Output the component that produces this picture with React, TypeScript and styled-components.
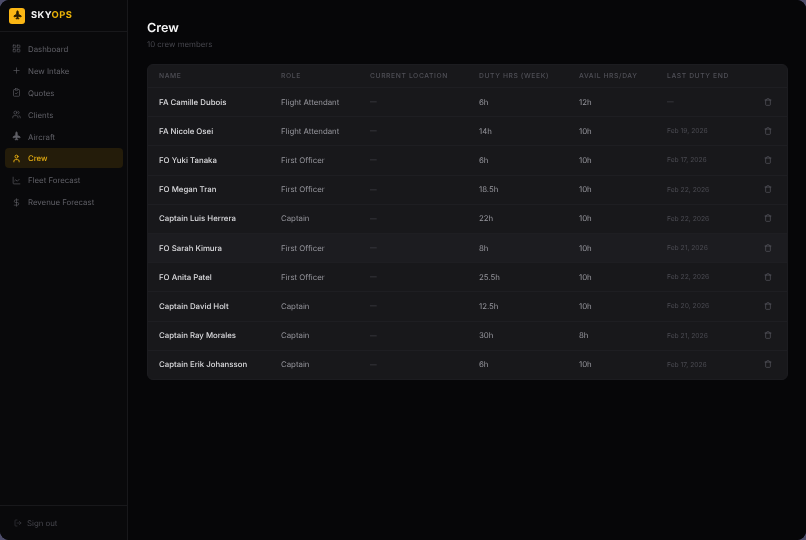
import React from 'react';
import styled, { createGlobalStyle } from 'styled-components';
import {
  LayoutGrid,
  Plus,
  ClipboardCheck,
  Users,
  Plane,
  User,
  ChartLine,
  DollarSign,
  LogOut,
  Trash,
} from 'lucide-react';

const GlobalStyle = createGlobalStyle`
  html, body {
    margin: 0;
    padding: 0;
    height: 100%;
    background: #4d4d6b;
  }
  #root {
    height: 100%;
  }
  * {
    box-sizing: border-box;
  }
`;

const Shell = styled.div`
  display: flex;
  width: 806px;
  height: 540px;
  overflow: hidden;
  border-radius: 9px;
  background: #060608;
  font-family: Inter, 'Liberation Sans', sans-serif;
  text-rendering: geometricPrecision;
  -webkit-font-smoothing: antialiased;
  will-change: transform;
`;

const Sidebar = styled.aside`
  width: 128px;
  flex-shrink: 0;
  display: flex;
  flex-direction: column;
  background: #09090b;
  border-right: 1px solid #18181b;
`;

const Brand = styled.div`
  height: 32px;
  display: flex;
  align-items: center;
  gap: 6px;
  padding: 0 9px;
  border-bottom: 1px solid #18181b;
`;

const BrandMark = styled.div`
  width: 16px;
  height: 16px;
  border-radius: 3px;
  background: #fbb614;
  color: #2a1d02;
  display: flex;
  align-items: center;
  justify-content: center;
`;

const TopPlane = styled(Plane)`
  transform: rotate(-45deg);
  fill: currentColor;
`;

const BrandName = styled.span`
  font-size: 9.4px;
  font-weight: 700;
  letter-spacing: 0.4px;
  color: #f4f4f5;
`;

const BrandAccent = styled.span`
  color: #eab308;
`;

const Nav = styled.nav`
  flex: 1;
  display: flex;
  flex-direction: column;
  gap: 2px;
  padding: 7px 4px 7px 5px;
`;

const NavItem = styled.div<{ $active?: boolean }>`
  height: 19.9px;
  display: flex;
  align-items: center;
  gap: 7px;
  padding: 0 7px;
  border-radius: 4px;
  font-size: 7.84px;
  font-weight: ${(p) => (p.$active ? 500 : 400)};
  color: ${(p) => (p.$active ? '#e5ad12' : '#606067')};
  background: ${(p) => (p.$active ? '#241c0a' : 'transparent')};
`;

const SidebarFoot = styled.div`
  height: 35px;
  display: flex;
  align-items: center;
  gap: 5px;
  padding: 0 14px;
  border-top: 1px solid #18181b;
  font-size: 7.84px;
  color: #46464d;
`;

const Main = styled.main`
  flex: 1;
  padding: 20px 19px 0;
  background: #060608;
`;

const Title = styled.h1`
  margin: 0;
  font-size: 12.6px;
  line-height: 18px;
  font-weight: 600;
  color: #f4f4f5;
`;

const Subtitle = styled.p`
  margin: 1px 0 14px;
  font-size: 7.84px;
  line-height: 11px;
  color: #46464d;
`;

const Table = styled.div`
  width: 641px;
  background: #18181b;
  border: 1px solid #1c1c20;
  border-radius: 6px;
  overflow: hidden;
`;

const Row = styled.div<{ $head?: boolean; $hover?: boolean }>`
  display: grid;
  grid-template-columns: 122px 89px 109px 100px 88px 90px 1fr;
  align-items: center;
  height: ${(p) => (p.$head ? '22px' : '29.2px')};
  padding-left: 11px;
  padding-bottom: 1px;
  background: ${(p) => (p.$hover ? '#1c1c20' : 'transparent')};
  border-top: ${(p) => (p.$head ? 'none' : '1px solid #1e1e22')};
`;

const HeadCell = styled.div`
  font-size: 6.72px;
  font-weight: 500;
  letter-spacing: 0.62px;
  text-transform: uppercase;
  color: #505057;
`;

const NameCell = styled.div`
  font-size: 7.84px;
  font-weight: 500;
  color: #dedee1;
`;

const Cell = styled.div`
  font-size: 7.84px;
  color: #96969d;
`;

const Muted = styled.div`
  font-size: 6.72px;
  color: #4a4a51;
`;

const DeleteCell = styled.div`
  display: flex;
  justify-content: flex-end;
  padding-right: 15px;
  color: #5c5c64;
`;

const navItems = [
  { label: 'Dashboard', icon: LayoutGrid },
  { label: 'New Intake', icon: Plus },
  { label: 'Quotes', icon: ClipboardCheck },
  { label: 'Clients', icon: Users },
  { label: 'Aircraft', icon: TopPlane },
  { label: 'Crew', icon: User, active: true },
  { label: 'Fleet Forecast', icon: ChartLine },
  { label: 'Revenue Forecast', icon: DollarSign },
];

const crew = [
  { name: 'FA Camille Dubois', role: 'Flight Attendant', duty: '6h', avail: '12h', end: '—' },
  { name: 'FA Nicole Osei', role: 'Flight Attendant', duty: '14h', avail: '10h', end: 'Feb 19, 2026' },
  { name: 'FO Yuki Tanaka', role: 'First Officer', duty: '6h', avail: '10h', end: 'Feb 17, 2026' },
  { name: 'FO Megan Tran', role: 'First Officer', duty: '18.5h', avail: '10h', end: 'Feb 22, 2026' },
  { name: 'Captain Luis Herrera', role: 'Captain', duty: '22h', avail: '10h', end: 'Feb 22, 2026' },
  { name: 'FO Sarah Kimura', role: 'First Officer', duty: '8h', avail: '10h', end: 'Feb 21, 2026', hover: true },
  { name: 'FO Anita Patel', role: 'First Officer', duty: '25.5h', avail: '10h', end: 'Feb 22, 2026' },
  { name: 'Captain David Holt', role: 'Captain', duty: '12.5h', avail: '10h', end: 'Feb 20, 2026' },
  { name: 'Captain Ray Morales', role: 'Captain', duty: '30h', avail: '8h', end: 'Feb 21, 2026' },
  { name: 'Captain Erik Johansson', role: 'Captain', duty: '6h', avail: '10h', end: 'Feb 17, 2026' },
];

export default function App() {
  return (
    <Shell>
      <GlobalStyle />
      <Sidebar>
        <Brand>
          <BrandMark>
            <TopPlane size={9} strokeWidth={2.4} />
          </BrandMark>
          <BrandName>
            SKY<BrandAccent>OPS</BrandAccent>
          </BrandName>
        </Brand>
        <Nav>
          {navItems.map(({ label, icon: Icon, active }) => (
            <NavItem key={label} $active={active}>
              <Icon size={9} strokeWidth={active ? 2.6 : 1.7} />
              {label}
            </NavItem>
          ))}
        </Nav>
        <SidebarFoot>
          <LogOut size={8} strokeWidth={1.6} />
          Sign out
        </SidebarFoot>
      </Sidebar>
      <Main>
        <Title>Crew</Title>
        <Subtitle>10 crew members</Subtitle>
        <Table>
          <Row $head>
            <HeadCell>Name</HeadCell>
            <HeadCell>Role</HeadCell>
            <HeadCell>Current Location</HeadCell>
            <HeadCell>Duty Hrs (Week)</HeadCell>
            <HeadCell>Avail Hrs/Day</HeadCell>
            <HeadCell>Last Duty End</HeadCell>
            <HeadCell />
          </Row>
          {crew.map((member) => (
            <Row key={member.name} $hover={member.hover}>
              <NameCell>{member.name}</NameCell>
              <Cell>{member.role}</Cell>
              <Muted>—</Muted>
              <Cell>{member.duty}</Cell>
              <Cell>{member.avail}</Cell>
              <Muted>{member.end}</Muted>
              <DeleteCell>
                <Trash size={8} strokeWidth={2} />
              </DeleteCell>
            </Row>
          ))}
        </Table>
      </Main>
    </Shell>
  );
}
